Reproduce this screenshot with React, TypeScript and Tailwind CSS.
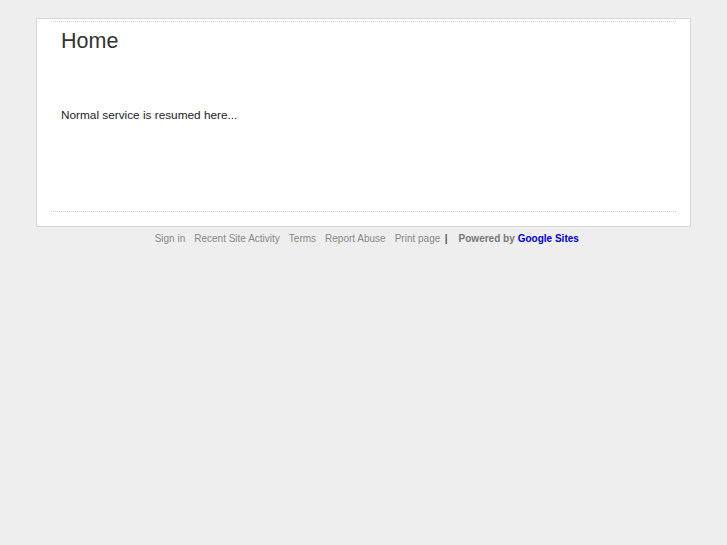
import React from "react";

export default function App() {
  const links = ["Sign in", "Recent Site Activity", "Terms", "Report Abuse", "Print page"];
  return (
    <div
      className="min-h-screen w-full bg-[#eeeeee] pt-[18px]"
      style={{ fontFamily: '"Liberation Sans", Arial, sans-serif' }}
    >
      <div className="ml-[36px] w-[655px] h-[209px] border border-[#d8d8d8] bg-white px-[14px] pt-[2px] flex flex-col">
        <div className="border-t border-dotted border-[#cfcfcf]" />
        <div className="px-[10px] flex-1">
          <h1 className="mt-[5px] text-[21.5px] leading-[28px] text-[#333333]">Home</h1>
          <p className="mt-[52px] text-[11.8px] leading-[16px] text-[#222222]">
            Normal service is resumed here...
          </p>
        </div>
        <div className="border-t border-dotted border-[#cfcfcf] mb-[14px]" />
      </div>
      <div className="w-[727px] flex justify-center pl-[2px] mt-[5px] text-[10px] leading-[14px] text-[#888888]">
        {links.map((l) => (
          <span key={l} className="mx-[4.5px]">
            {l}
          </span>
        ))}
        <span className="ml-0 mr-[11px] font-bold text-[#555555]">|</span>
        <span className="font-bold text-[#777777]">Powered by</span>
        <span className="ml-[3px] font-bold text-[#0000cc]">Google Sites</span>
      </div>
    </div>
  );
}
